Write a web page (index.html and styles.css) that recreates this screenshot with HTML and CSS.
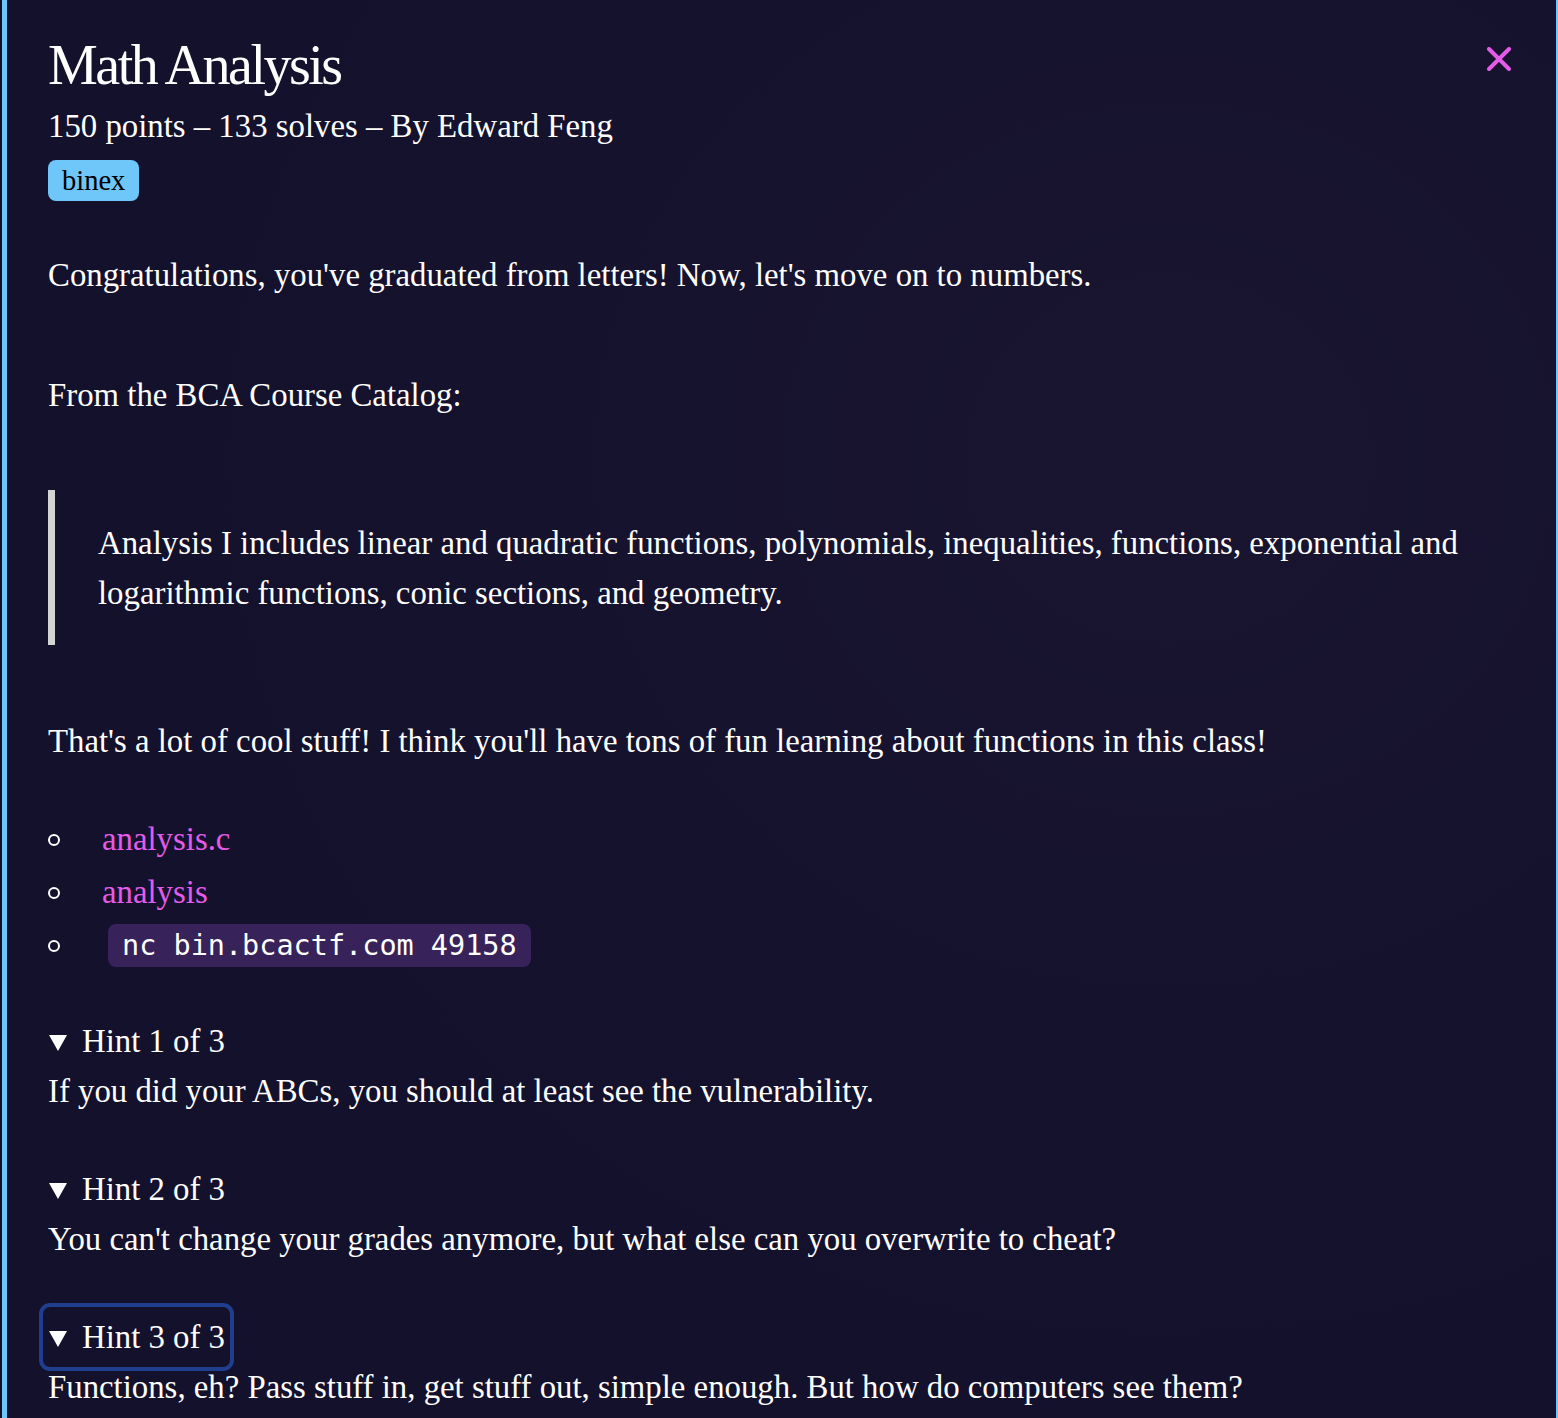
FILE: index.html
```html
<!DOCTYPE html>
<html lang="en">
<head>
<meta charset="utf-8">
<title>Math Analysis</title>
<link rel="stylesheet" href="styles.css">
</head>
<body>
<div class="modal">
  <header class="head">
    <div class="head-text">
      <h1 class="title">Math Analysis</h1>
      <div class="meta">150 points – 133 solves – By Edward Feng</div>
      <span class="tag">binex</span>
    </div>
    <button class="close" aria-label="Close">
      <svg width="24" height="24" viewBox="0 0 24 24"><path d="M2 2 L22 22 M22 2 L2 22" stroke="#e35be6" stroke-width="4" stroke-linecap="round" fill="none"/></svg>
    </button>
  </header>

  <div class="desc">
    <p class="p1">Congratulations, you've graduated from letters! Now, let's move on to numbers.</p>
    <p class="p2">From the BCA Course Catalog:</p>
    <blockquote class="quote">Analysis I includes linear and quadratic functions, polynomials, inequalities, functions, exponential and logarithmic functions, conic sections, and geometry.</blockquote>
    <p class="p3">That's a lot of cool stuff! I think you'll have tons of fun learning about functions in this class!</p>
    <ul class="files">
      <li class="file"><a href="#">analysis.c</a></li>
      <li class="file"><a href="#">analysis</a></li>
      <li class="file"><code class="code">nc bin.bcactf.com 49158</code></li>
    </ul>
  </div>

  <details class="hint" open>
    <summary class="hint-sum">Hint 1 of 3</summary>
    <p class="hint-text">If you did your ABCs, you should at least see the vulnerability.</p>
  </details>
  <details class="hint" open>
    <summary class="hint-sum">Hint 2 of 3</summary>
    <p class="hint-text">You can't change your grades anymore, but what else can you overwrite to cheat?</p>
  </details>
  <details class="hint" open>
    <summary class="hint-sum focused">Hint 3 of 3</summary>
    <p class="hint-text">Functions, eh? Pass stuff in, get stuff out, simple enough. But how do computers see them?</p>
  </details>
</div>
</body>
</html>
```

FILE: styles.css
```css
html, body {
  margin: 0;
  padding: 0;
  height: 100%;
  overflow: hidden;
}
body {
  background: #14112c;
  font-family: "Liberation Serif", "Times New Roman", serif;
  color: #ffffff;
  font-size: 32.8px;
  line-height: 50px;
}
.modal {
  margin-left: 2px;
  border-left: 5px solid #6ec6f9;
  border-right: 2px solid #6ec6f9;
  min-height: 1500px;
  padding: 33px 41px 0 41px;
  background: radial-gradient(ellipse at 75% 30%, #191530 0%, #14112c 60%);
}
.head {
  display: flex;
  justify-content: space-between;
  align-items: flex-start;
}
.title {
  margin: 0;
  font-size: 56px;
  line-height: 64px;
  font-weight: normal;
  letter-spacing: -2.5px;
}
.meta {
  margin-top: 4px;
  line-height: 50px;
}
.tag {
  display: block;
  width: fit-content;
  margin-top: 9px;
  background: #6ec6f9;
  color: #000;
  font-size: 28.5px;
  line-height: 41px;
  padding: 0 14px;
  border-radius: 8px;
}
.close {
  background: none;
  border: 0;
  padding: 0;
  margin: 14px 4px 0 0;
  width: 24px;
  height: 24px;
  cursor: pointer;
}
.close svg { display: block; }
.desc p { margin: 0; }
.p1 { margin-top: 49px !important; }
.p2 { margin-top: 70px !important; }
.quote {
  margin: 70px 0 0 0;
  border-left: 7px solid #d4d4d4;
  padding: 28px 0 27px 43px;
}
.p3 { margin-top: 71px !important; }
.files {
  list-style: none;
  margin: 48px 0 0 0;
  padding: 0;
}
.file {
  display: flex;
  align-items: center;
  height: 50px;
  margin-bottom: 3px;
}
.file::before {
  content: "";
  flex: none;
  width: 8px;
  height: 8px;
  border: 2px solid #ffffff;
  border-radius: 50%;
  margin: 2px 42px 0 0;
}
.file a {
  color: #e35be6;
  text-decoration: none;
}
.code {
  display: block;
  margin-left: 6px;
  font-family: "DejaVu Sans Mono", monospace;
  font-size: 28.5px;
  line-height: 43px;
  padding: 0 14px;
  background: #38225a;
  border-radius: 8px;
}
.hint { margin-top: 46px; }
.hint + .hint { margin-top: 48px; }
.hint-sum {
  list-style: none;
  width: fit-content;
  cursor: pointer;
  display: block;
}
.hint-sum::-webkit-details-marker { display: none; }
.hint-sum::before {
  content: "";
  display: inline-block;
  width: 0;
  height: 0;
  border-left: 9px solid transparent;
  border-right: 9px solid transparent;
  border-top: 16px solid #ffffff;
  margin: 0 15px 0 1px;
  vertical-align: 1px;
}
.focused {
  outline: 4px solid #1f3f8e;
  outline-offset: 5px;
  border-radius: 2px;
}
.hint-text { margin: 0; }
```
